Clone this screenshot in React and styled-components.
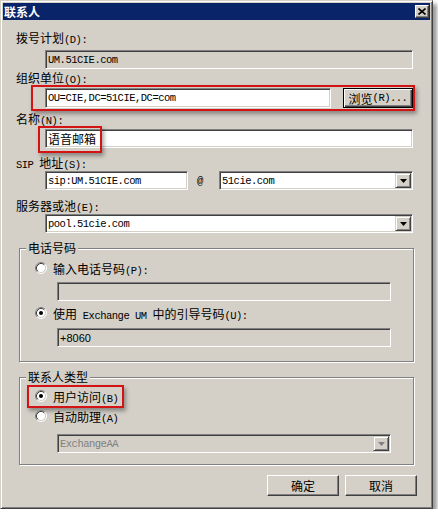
import React from 'react'
import styled, { createGlobalStyle } from 'styled-components'

const CJK = `"Noto Sans CJK SC", "Liberation Sans", sans-serif`
const MONO = `"Liberation Mono", "Noto Sans CJK SC", monospace`

const GlobalStyle = createGlobalStyle`
  body {
    margin: 0;
    background: #fff;
  }
`

const Window = styled.div`
  box-sizing: border-box;
  width: 433px;
  height: 509px;
  padding: 2px;
  border: 1px solid;
  border-color: #d4d0c8 #404040 #404040 #d4d0c8;
  background: #d4d0c8;
  box-shadow: inset 1px 1px #fff, inset -1px -1px #808080, 4px 4px 4px rgba(0, 0, 0, 0.4);
  font-family: ${CJK};
  font-size: 12px;
  color: #000;
  display: flex;
  flex-direction: column;
`

const TitleBar = styled.div`
  height: 17px;
  flex: none;
  background: #0a246a;
  color: #fff;
  font-weight: bold;
  display: flex;
  align-items: center;
  justify-content: space-between;
  padding: 0 1px 0 1px;
  line-height: 17px;
`

const CloseButton = styled.div`
  box-sizing: border-box;
  width: 14px;
  height: 13px;
  background: #d4d0c8;
  border: 1px solid;
  border-color: #fff #404040 #404040 #fff;
  box-shadow: inset -1px -1px #808080;
  display: flex;
  align-items: center;
  justify-content: center;
`

const Body = styled.div`
  flex: 1;
  display: flex;
  flex-direction: column;
  padding: 10px 17px 0 13px;
`

const Label = styled.div`
  height: 16px;
  line-height: 16px;
  white-space: nowrap;
  margin-top: ${p => p.$mt || 0}px;
`

// SimSun-like half-width latin: narrow mono, roughly 6px per glyph
const Latin = styled.span`
  font-family: ${MONO};
  font-size: 10.5px;
  letter-spacing: -0.5px;
`

const Han = styled.span`
  font-family: ${CJK};
  font-size: 12px;
  letter-spacing: 0;
`

const Sans = styled.span`
  font-family: "Liberation Sans", sans-serif;
  font-size: 11px;
  letter-spacing: 0;
`

const Sunken = styled.div`
  box-sizing: border-box;
  position: relative;
  height: ${p => p.$h || 19}px;
  width: ${p => (p.$w ? `${p.$w}px` : 'auto')};
  flex: ${p => (p.$w ? 'none' : '1')};
  border: 1px solid;
  border-color: #808080 #fff #fff #808080;
  box-shadow: inset 1px 1px #404040, inset -1px -1px #d4d0c8;
  background: ${p => (p.$gray ? '#d4d0c8' : '#fff')};
  color: ${p => (p.$dim ? '#808080' : '#000')};
  display: flex;
  align-items: center;
  padding: 0 1px 0 2px;
  font-family: ${MONO};
  font-size: 10.5px;
  letter-spacing: -0.5px;
  white-space: nowrap;
`

const FieldRow = styled.div`
  display: flex;
  align-items: center;
  margin-left: ${p => (p.$ml === undefined ? 29 : p.$ml)}px;
  margin-top: ${p => p.$mt || 0}px;
`

const DropButton = styled.div`
  box-sizing: border-box;
  width: 16px;
  height: 15px;
  flex: none;
  margin-left: auto;
  background: #d4d0c8;
  border: 1px solid;
  border-color: #d4d0c8 #404040 #404040 #d4d0c8;
  box-shadow: inset 1px 1px #fff, inset -1px -1px #808080;
  display: flex;
  align-items: center;
  justify-content: center;
`

const At = styled.div`
  width: 31px;
  flex: none;
  padding-left: 9px;
  box-sizing: border-box;
  font-family: ${MONO};
  font-size: 10.5px;
`

const Highlight = styled.div`
  box-sizing: border-box;
  border: 2px solid #d41414;
  box-shadow: 2px 3px 4px rgba(0, 0, 0, 0.35);
`

const OrgBox = styled(Highlight)`
  display: flex;
  align-items: center;
  margin: -1px -2px 0 15px;
  padding: 1px 0 1px 12px;
`

const Callout = styled(Highlight)`
  position: absolute;
  left: ${p => p.$l}px;
  top: ${p => p.$t}px;
  width: ${p => p.$w}px;
  height: ${p => p.$h}px;
  pointer-events: none;
`

const Button = styled.div`
  box-sizing: border-box;
  width: ${p => p.$w}px;
  height: ${p => p.$h}px;
  flex: none;
  margin-left: ${p => p.$ml || 0}px;
  background: #d4d0c8;
  border: 1px solid;
  border-color: ${p => (p.$default ? '#000' : '#fff #404040 #404040 #fff')};
  box-shadow: ${p =>
    p.$default
      ? 'inset 1px 1px #fff, inset -1px -1px #404040, inset -2px -2px #808080'
      : 'inset -1px -1px #808080'};
  display: flex;
  align-items: center;
  justify-content: center;
  white-space: nowrap;
  font-size: 12px;
`

const Group = styled.fieldset`
  margin: ${p => p.$mt}px -1px 0 3px;
  padding: ${p => p.$pt}px 22px ${p => p.$pb}px 6px;
  border: 1px solid #808080;
  box-shadow: 1px 1px #fff, inset 1px 1px #fff;
  min-width: 0;
`

const GroupTitle = styled.legend`
  padding: 0 2px;
  margin: 0;
  height: 16px;
  line-height: 16px;
  background: #d4d0c8;
`

const RadioRow = styled.div`
  position: relative;
  display: flex;
  align-items: center;
  gap: 6px;
  height: 16px;
  margin-left: 9px;
  margin-top: ${p => p.$mt || 0}px;
  white-space: nowrap;
`

const ButtonRow = styled.div`
  display: flex;
  justify-content: flex-end;
  gap: 6px;
  margin: 10px -4px 0 0;
`

const Radio = ({ checked }) => (
  <svg width="12" height="12" viewBox="0 0 12 12" style={{ flex: 'none' }}>
    <circle cx="6" cy="6" r="4.5" fill="#fff" />
    <path d="M2.11 9.89 A5.5 5.5 0 0 1 9.89 2.11" stroke="#808080" fill="none" />
    <path d="M9.89 2.11 A5.5 5.5 0 0 1 2.11 9.89" stroke="#fff" fill="none" />
    <path d="M2.82 9.18 A4.5 4.5 0 0 1 9.18 2.82" stroke="#404040" fill="none" />
    <path d="M9.18 2.82 A4.5 4.5 0 0 1 2.82 9.18" stroke="#d4d0c8" fill="none" />
    {checked && <circle cx="6" cy="6" r="2" fill="#000" />}
  </svg>
)

const Arrow = ({ color = '#000' }) => (
  <svg width="7" height="4" viewBox="0 0 7 4">
    <polygon points="0,0 7,0 3.5,4" fill={color} />
  </svg>
)

const Combo = ({ children, dim, gray, width }) => (
  <Sunken $dim={dim} $gray={gray} $w={width}>
    {children}
    <DropButton>
      <Arrow color={dim ? '#808080' : '#000'} />
    </DropButton>
  </Sunken>
)

export default function App() {
  return (
    <>
      <GlobalStyle />
      <Window>
        <TitleBar>
          <span>联系人</span>
          <CloseButton>
            <svg width="8" height="7" viewBox="0 0 8 7">
              <path d="M0.5 0.5 L7.5 6.5 M7.5 0.5 L0.5 6.5" stroke="#000" strokeWidth="1.6" />
            </svg>
          </CloseButton>
        </TitleBar>
        <Body>
          <Label>拨号计划<Latin>(D):</Latin></Label>
          <FieldRow $mt={4}>
            <Sunken $gray>UM.51CIE.com</Sunken>
          </FieldRow>

          <Label $mt={1}>组织单位<Latin>(O):</Latin></Label>
          <OrgBox>
            <Sunken $h={20}>OU=CIE,DC=51CIE,DC=com</Sunken>
            <Button $default $w={70} $h={20} $ml={12}>
              浏览<Latin>(R)...</Latin>
            </Button>
          </OrgBox>

          <Label>名称<Latin>(N):</Latin></Label>
          <FieldRow $mt={2}>
            <Sunken>
              <Han>语音邮箱</Han>
              <Callout $l={-8} $t={-4} $w={64} $h={27} />
            </Sunken>
          </FieldRow>

          <Label $mt={7}><Latin>SIP </Latin>地址<Latin>(S):</Latin></Label>
          <FieldRow>
            <Sunken $w={143}>sip:UM.51CIE.com</Sunken>
            <At>@</At>
            <Combo>51cie.com</Combo>
          </FieldRow>

          <Label $mt={8}>服务器或池<Latin>(E):</Latin></Label>
          <FieldRow>
            <Combo>pool.51cie.com</Combo>
          </FieldRow>

          <Group $mt={7} $pt={4} $pb={14}>
            <GroupTitle>电话号码</GroupTitle>
            <RadioRow>
              <Radio />
              <span>输入电话号码<Latin>(P):</Latin></span>
            </RadioRow>
            <FieldRow $ml={31} $mt={6}>
              <Sunken $gray />
            </FieldRow>
            <RadioRow $mt={4}>
              <Radio checked />
              <span>使用<Latin> Exchange UM </Latin>中的引导号码<Latin>(U):</Latin></span>
            </RadioRow>
            <FieldRow $ml={31} $mt={7}>
              <Sunken $gray><Sans>+8060</Sans></Sunken>
            </FieldRow>
          </Group>

          <Group $mt={7} $pt={3} $pb={11}>
            <GroupTitle>联系人类型</GroupTitle>
            <RadioRow>
              <Radio checked />
              <span>用户访问<Latin>(B)</Latin></span>
              <Callout $l={-8} $t={-3} $w={97} $h={23} />
            </RadioRow>
            <RadioRow $mt={4}>
              <Radio />
              <span>自动助理<Latin>(A)</Latin></span>
            </RadioRow>
            <FieldRow $ml={31} $mt={10}>
              <Combo dim gray>ExchangeAA</Combo>
            </FieldRow>
          </Group>

          <ButtonRow>
            <Button $w={72} $h={21}>确定</Button>
            <Button $w={72} $h={21}>取消</Button>
          </ButtonRow>
        </Body>
      </Window>
    </>
  )
}
